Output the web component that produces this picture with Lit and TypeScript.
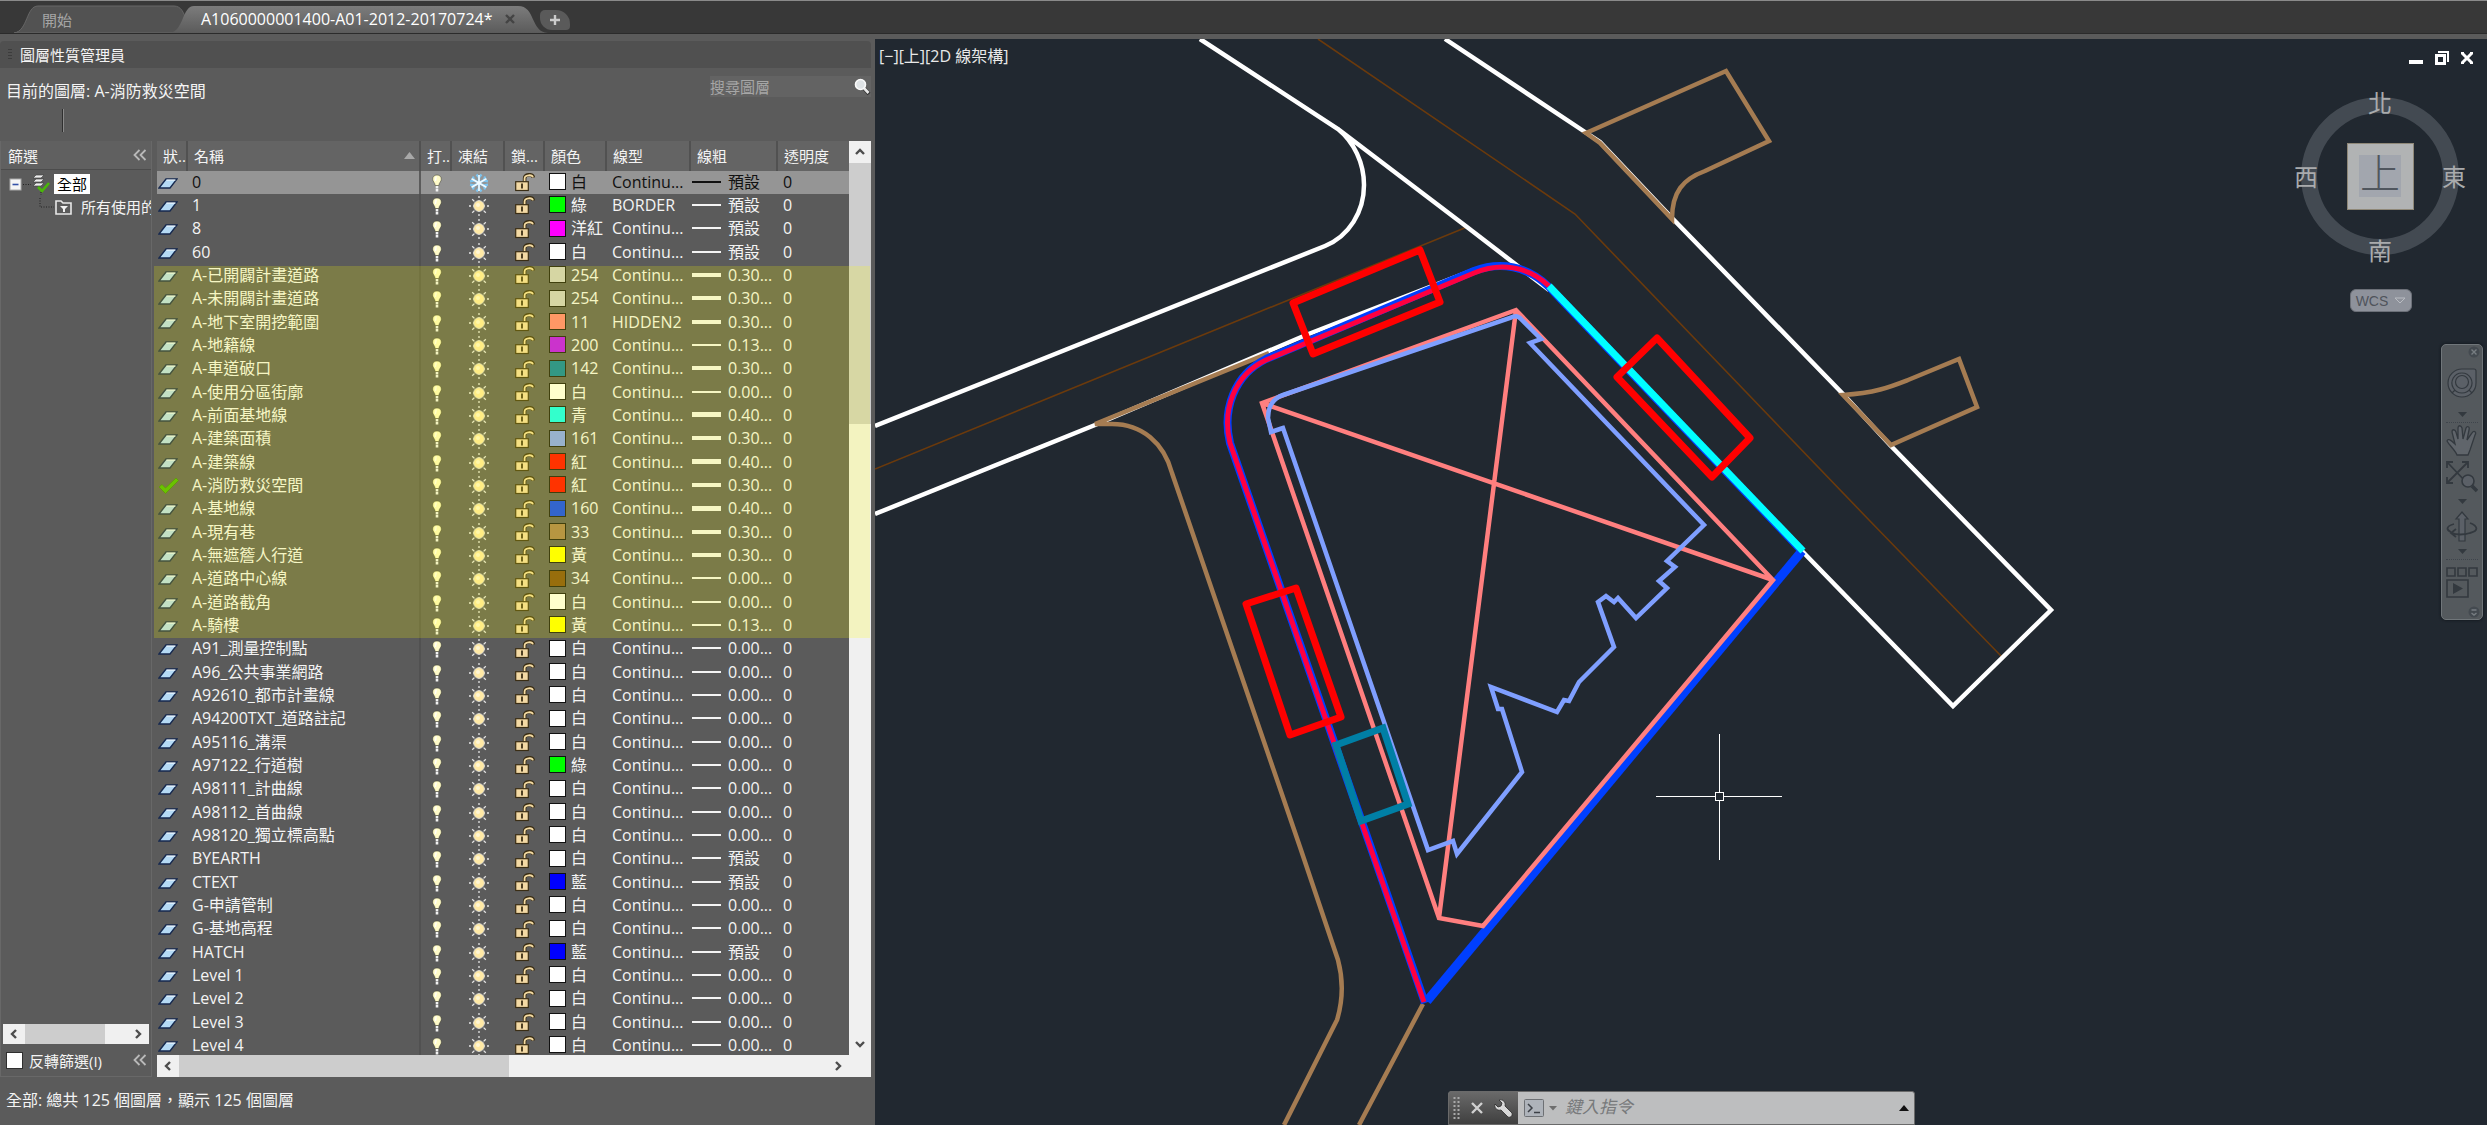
import { LitElement, html, css, svg } from "lit";
import { customElement, state } from "lit/decorators.js";
import { classMap } from "lit/directives/class-map.js";
import { styleMap } from "lit/directives/style-map.js";

interface Layer {
  name: string;
  color: string;
  hex: string;
  linetype: string;
  weight: string;
  px: number;
}

const WHITE = "#ffffff";
const layer = (
  name: string,
  color = "白",
  hex = WHITE,
  weight = "0.00...",
  px = 2,
  linetype = "Continu...",
): Layer => ({ name, color, hex, linetype, weight, px });

const LAYERS: Layer[] = [
  layer("0", "白", WHITE, "預設"),
  layer("1", "綠", "#00ff00", "預設", 2, "BORDER"),
  layer("8", "洋紅", "#ff00ff", "預設"),
  layer("60", "白", WHITE, "預設"),
  layer("A-已開闢計畫道路", "254", "#cccccc", "0.30...", 4),
  layer("A-未開闢計畫道路", "254", "#cccccc", "0.30...", 4),
  layer("A-地下室開挖範圍", "11", "#ff7f7f", "0.30...", 4, "HIDDEN2"),
  layer("A-地籍線", "200", "#bf00ff", "0.13..."),
  layer("A-車道破口", "142", "#007fa5", "0.30...", 4),
  layer("A-使用分區街廓"),
  layer("A-前面基地線", "青", "#00ffff", "0.40...", 5),
  layer("A-建築面積", "161", "#7f9fff", "0.30...", 4),
  layer("A-建築線", "紅", "#ff0000", "0.40...", 5),
  layer("A-消防救災空間", "紅", "#ff0000", "0.30...", 4),
  layer("A-基地線", "160", "#003fff", "0.40...", 5),
  layer("A-現有巷", "33", "#a57c52", "0.30...", 4),
  layer("A-無遮簷人行道", "黃", "#ffff00", "0.30...", 4),
  layer("A-道路中心線", "34", "#7f4a10"),
  layer("A-道路截角"),
  layer("A-騎樓", "黃", "#ffff00", "0.13..."),
  layer("A91_測量控制點"),
  layer("A96_公共事業網路"),
  layer("A92610_都市計畫線"),
  layer("A94200TXT_道路註記"),
  layer("A95116_溝渠"),
  layer("A97122_行道樹", "綠", "#00ff00"),
  layer("A98111_計曲線"),
  layer("A98112_首曲線"),
  layer("A98120_獨立標高點"),
  layer("BYEARTH", "白", WHITE, "預設"),
  layer("CTEXT", "藍", "#0000ff", "預設"),
  layer("G-申請管制"),
  layer("G-基地高程"),
  layer("HATCH", "藍", "#0000ff", "預設"),
  layer("Level 1"),
  layer("Level 2"),
  layer("Level 3"),
  layer("Level 4"),
];

const CURRENT = "A-消防救災空間";

const icon = (w: number, h: number, body: unknown) =>
  html`<svg class="ic" width=${w} height=${h} viewBox="0 0 ${w} ${h}" aria-hidden="true">${body}</svg>`;

const sheetIcon = () =>
  icon(20, 14, svg`<path d="M1 12 L8 3 L19 3 L12 12Z" fill="#b5daf5" stroke="#16294f" stroke-width="1.4"/>
    <path d="M8.5 4 L17.5 4" stroke="#fff"/>`);
const checkIcon = () =>
  icon(22, 18, svg`<path d="M1 10 L4 7.5 L7.5 11 L18 1 L20.5 3.5 L7.5 16.5Z" fill="#45b400" stroke="#2f7d00" stroke-width=".6"/>`);
const bulbIcon = () =>
  icon(12, 18, svg`<path d="M6 1C3 1 1.7 3 1.7 5.2C1.7 7.6 4 8.6 4.2 11.5L7.8 11.5C8 8.6 10.3 7.6 10.3 5.2C10.3 3 9 1 6 1Z" fill="#fffbc9" stroke="#3c3c2c" stroke-width=".5"/>
    <path d="M5.2 2.5L4.4 7" stroke="#fff" stroke-width="1.4"/>
    <path d="M6 12V17.5" stroke="#f2f2f2" stroke-width="2.6" stroke-dasharray="2.4 .7"/>`);
const sunIcon = () =>
  icon(20, 20, svg`<g stroke="#e6e6e6" stroke-width="1.3"><path d="M10 0V20M0 10H20" stroke-dasharray="2 2 12 2"/>
    <path d="M3.2 3.2L5.4 5.4M14.6 14.6L16.8 16.8M16.8 3.2L14.6 5.4M5.4 14.6L3.2 16.8"/></g>
    <circle cx="10" cy="10" r="5.4" fill="#ffe9a6" stroke="#cfcfcf" stroke-width=".8"/><circle cx="9" cy="9" r="2" fill="#fff6d6"/>`);
const snowIcon = () =>
  icon(20, 20, svg`<g stroke="#7cc4ef" stroke-width="2.2" fill="none"><path d="M10 2V18M2.6 5.8L17.4 14.2M17.4 5.8L2.6 14.2M7.5 1.5L10 4.5L12.5 1.5M7.5 18.5L10 15.5L12.5 18.5M1 8.3L5 7.6L4 3.6M19 8.3L15 7.6L16 3.6M1 11.7L5 12.4L4 16.4M19 11.7L15 12.4L16 16.4"/></g>
    <g stroke="#f2fbff" stroke-width="1.6"><path d="M10 2V18M2.6 5.8L17.4 14.2M17.4 5.8L2.6 14.2"/></g>`);
const lockIcon = () =>
  icon(22, 19, svg`<path d="M10.6 9V5.4C10.6 1 18.6 .4 19.3 4.6" fill="none" stroke="#3a2d14" stroke-width="3.6"/>
    <path d="M10.6 9V5.4C10.6 1.6 18.4 1.2 18.9 4.4" fill="none" stroke="#f5dca4" stroke-width="1.8"/>
    <rect x="1.7" y="8.7" width="12.6" height="8.8" fill="#f3d9a4" stroke="#3a2d14" stroke-width="1.2"/>
    <path d="M8 10.5V15.5" stroke="#3a2d14" stroke-width="1.8"/>`);
const chevrons = () =>
  icon(14, 12, svg`<path d="M6.5 1L1.5 6L6.5 11M12.5 1L7.5 6L12.5 11" fill="none" stroke="#b9b9b9" stroke-width="1.8"/>`);
const arrow = (d: string) =>
  icon(12, 12, svg`<path d=${d} fill="none" stroke="#4d4d4d" stroke-width="2.4"/>`);

@customElement("layer-manager")
class LayerManager extends LitElement {
  @state() private off = new Set<string>();
  @state() private invert = false;

  static styles = css`
    :host { display: grid; grid-template-rows: auto auto 1fr auto; min-height: 0; background: #5b5b5b; color: #f4f4f4; padding: 2px 4px 0 0; }
    * { box-sizing: border-box; }
    button { font: inherit; color: inherit; background: none; border: 0; padding: 0; display: inline-flex; align-items: center; justify-content: center; }
    .ic { display: block; flex: none; }
    .title { margin: 0; height: 27px; display: flex; align-items: center; gap: 8px; padding: 0 8px; font-size: 15px; font-weight: 400; background: #505050; border-radius: 4px 4px 0 0; }
    .grip { width: 4px; height: 12px; background: repeating-linear-gradient(#3c3c3c 0 1px, transparent 1px 3px); }
    .tools { height: 73px; display: flex; justify-content: space-between; align-items: flex-start; padding: 8px 0 0 6px; }
    .current { margin: 0; padding-top: 4px; line-height: 22px; }
    .mark { width: 2px; height: 23px; margin: 7px 0 0 56px; border-left: 1px solid #2f2f2f; border-right: 1px solid #8a8a8a; }
    .search { display: flex; align-items: center; width: 161px; height: 21px; background: #636363; }
    .search input { flex: 1; min-width: 0; border: 0; background: none; color: #eee; font: inherit; font-size: 15px; padding: 0; outline: 0; }
    .search input::placeholder { color: #a6a6a6; opacity: 1; }
    .body { display: grid; grid-template-columns: 152px minmax(0, 1fr); gap: 5px; min-height: 0; }
    .filters { display: grid; grid-template-rows: 29px minmax(0, 1fr) 20px 32px; border: 1px solid #686868; border-top: 0; min-height: 0; }
    .bar { display: flex; align-items: center; justify-content: space-between; padding: 0 4px 0 7px; }
    .filters .head { background: #606060; border-bottom: 1px solid #4c4c4c; }
    .head h2 { margin: 0; font-size: 15px; font-weight: 400; }
    .tree { margin: 0; padding: 2px 0 0 8px; list-style: none; overflow: hidden; font-size: 15px; }
    .tree li { display: flex; align-items: center; height: 23px; white-space: nowrap; }
    .tree .picked { background: #fff; color: #000; line-height: 20px; padding: 0 3px; margin-left: 3px; }
    .tree .child { padding-left: 30px; gap: 8px; }
    .tree .text { line-height: 22px; }
    .hbar { display: flex; align-items: stretch; background: #f0f0f0; color: #4d4d4d; }
    .hbar button { width: 22px; }
    .hbar .track { flex: 1; }
    .hbar .thumb { display: block; height: 100%; background: #cdcdcd; }
    .filters .hbar { margin: 0 2px; }
    .filters .hbar .thumb { width: 78%; }
    .grid .hbar .thumb { width: 51%; }
    .bar label { display: flex; align-items: center; gap: 6px; font-size: 15px; }
    .bar input { appearance: none; width: 17px; height: 17px; margin: 0; background: #fff; border: 1px solid #2f2f2f; }
    .bar input:checked { background: #45b400; }
    .foot { padding-left: 5px; }
    .grid { position: relative; display: grid; grid-template-columns: minmax(0, 1fr) 22px; grid-template-rows: minmax(0, 1fr) 22px; min-height: 0; }
    .clip { overflow: hidden; min-height: 0; }
    table { width: 100%; border-collapse: separate; border-spacing: 0; table-layout: fixed; }
    th { height: 30px; padding: 0 0 1px 6px; font-size: 15px; font-weight: 400; text-align: left; background: #646464; border-right: 2px solid #515151; white-space: nowrap; overflow: hidden; }
    th:last-child { border-right: 0; }
    .sort { display: flex; justify-content: space-between; align-items: center; padding-right: 3px; }
    td { height: 23px; padding: 0 0 2px 5px; line-height: 20px; white-space: nowrap; overflow: hidden; }
    tr:nth-child(3n) td { height: 24px; }
    td.named { border-right: 2px solid #515151; padding-left: 4px; }
    td.icon { padding: 0; }
    td.icon button, td.icon .ic { margin: 0 auto; }
    td.icon button { display: flex; }
    td.st { padding: 0 0 0 1px; }
    .sel td { background: #959595; color: #111; }
    .sel td.named { border-right-color: #5b5b5b; }
    .pair { display: flex; align-items: center; gap: 5px; }
    .swatch { flex: none; width: 17px; height: 17px; border: 1px solid #111; }
    .line { flex: none; width: 29px; background: currentColor; }
    .wt { padding-left: 1px; gap: 7px; }
    td.flush { padding-left: 0; }
    td.paint { padding-left: 4px; }
    .off { opacity: 0.4; }
    .vbar { display: flex; flex-direction: column; background: #f0f0f0; }
    .vbar button { height: 22px; width: 100%; }
    .vbar .track { flex: 1; }
    .vbar .thumb { height: 30%; background: #cdcdcd; }
    .grid .hbar { grid-column: 1 / -1; padding-right: 22px; }
    .marker { position: absolute; left: -3px; right: 1px; top: 125px; height: 372px; background: rgba(255, 255, 0, 0.2); pointer-events: none; }
    .status { margin: 0; height: 48px; line-height: 46px; padding-left: 6px; }
  `;

  private toggle(key: string) {
    const next = new Set(this.off);
    next.has(key) ? next.delete(key) : next.add(key);
    this.off = next;
  }

  private cell(l: Layer, kind: string, label: string, glyph: unknown) {
    const key = `${l.name}/${kind}`;
    return html`<td class="icon"><button class=${classMap({ off: this.off.has(key) })} aria-label="${label} ${l.name}" @click=${() => this.toggle(key)}>${glyph}</button></td>`;
  }

  private row(l: Layer, i: number) {
    return html`<tr class=${classMap({ sel: i === 0 })}>
      <td class="st">${l.name === CURRENT ? checkIcon() : sheetIcon()}</td>
      <td class="named">${l.name}</td>
      ${this.cell(l, "on", "打開", bulbIcon())}
      ${this.cell(l, "freeze", "凍結", i === 0 ? snowIcon() : sunIcon())}
      ${this.cell(l, "lock", "鎖護", lockIcon())}
      <td class="paint"><span class="pair"><span class="swatch" style=${styleMap({ background: l.hex })}></span>${l.color}</span></td>
      <td>${l.linetype}</td>
      <td class="flush"><span class="pair wt"><span class="line" style=${styleMap({ height: `${l.px}px` })}></span>${l.weight}</span></td>
      <td>0</td>
    </tr>`;
  }

  render() {
    const widths = [31, 233, 31, 53, 40, 62, 84, 87, 71];
    return html`
      <h1 class="title"><span class="grip"></span>圖層性質管理員</h1>
      <div class="tools">
        <div>
          <p class="current">目前的圖層: ${CURRENT}</p>
          <div class="mark"></div>
        </div>
        <div class="search">
          <input type="search" aria-label="搜尋圖層" placeholder="搜尋圖層" />
          ${icon(17, 18, svg`<path d="M9 9L15 16" stroke="#333" stroke-width="4"/><path d="M9 9L14.5 15" stroke="#e8e8e8" stroke-width="2.6"/><circle cx="6.5" cy="6.5" r="5" fill="#dfe3e6" stroke="#fafafa" stroke-width="1.6"/>`)}
        </div>
      </div>
      <div class="body">
        <section class="filters">
          <div class="bar head"><h2>篩選</h2><button aria-label="收闔篩選">${chevrons()}</button></div>
          <ul class="tree">
            <li>
              ${icon(42, 22, svg`<rect x="1" y="6" width="11" height="11" fill="#f5f5f5" stroke="#aaa"/><path d="M3.5 11.5H9.5" stroke="#3452a8" stroke-width="1.6"/>
                <path d="M14 11.5H22" stroke="#222" stroke-dasharray="1 1.5"/>
                <path d="M24 5L27 2H35L32 5ZM24 9L27 6H35L32 9ZM24 13L27 10H35L32 13Z" fill="#eee" stroke="#444" stroke-width=".7"/>
                <path d="M29 14L33 18L40 10" fill="none" stroke="#4ab60a" stroke-width="2.6"/><path d="M32 19V22" stroke="#222" stroke-dasharray="1 1.5"/>`)}
              <span class="picked">全部</span>
            </li>
            <li class="child">
              ${icon(34, 18, svg`<path d="M1 0V9H15" fill="none" stroke="#222" stroke-dasharray="1 1.5"/>
                <path d="M17 3H22L24 5H32V16H17Z" fill="#5b5b5b" stroke="#e8e8e8" stroke-width="1.6"/><path d="M21 8H29L26 11V14H24V11Z" fill="#f0f0f0"/>`)}
              <span class="text">所有使用的圖層</span>
            </li>
          </ul>
          <div class="hbar">
            <button aria-label="向左">${arrow("M8 2L4 6L8 10")}</button><span class="track"><span class="thumb"></span></span><button aria-label="向右">${arrow("M4 2L8 6L4 10")}</button>
          </div>
          <div class="bar foot">
            <label><input type="checkbox" .checked=${this.invert} @change=${() => (this.invert = !this.invert)} />反轉篩選(I)</label>
            <button aria-label="收闔">${chevrons()}</button>
          </div>
        </section>
        <section class="grid">
          <div class="clip">
            <table>
              <colgroup>${widths.map((w) => html`<col style=${styleMap({ width: `${w}px` })} />`)}</colgroup>
              <thead>
                <tr>
                  <th>狀..</th>
                  <th><span class="sort">名稱 ${icon(13, 9, svg`<path d="M1 8L6.5 1L12 8Z" fill="#a8a8a8"/>`)}</span></th>
                  <th>打..</th><th>凍結</th><th>鎖...</th><th>顏色</th><th>線型</th><th>線粗</th><th>透明度</th>
                </tr>
              </thead>
              <tbody>${LAYERS.map((l, i) => this.row(l, i))}</tbody>
            </table>
          </div>
          <div class="vbar">
            <button aria-label="向上">${arrow("M2 8L6 4L10 8")}</button><div class="track"><div class="thumb"></div></div><button aria-label="向下">${arrow("M2 4L6 8L10 4")}</button>
          </div>
          <div class="hbar">
            <button aria-label="向左">${arrow("M8 2L4 6L8 10")}</button><span class="track"><span class="thumb"></span></span><button aria-label="向右">${arrow("M4 2L8 6L4 10")}</button>
          </div>
          <div class="marker"></div>
        </section>
      </div>
      <p class="status">全部: 總共 125 個圖層，顯示 125 個圖層</p>
    `;
  }
}

@customElement("drawing-view")
class DrawingView extends LitElement {
  static styles = css`
    :host { display: block; position: relative; overflow: hidden; background: #212830; color: #e8e8e8; min-width: 0; }
    * { box-sizing: border-box; }
    button { font: inherit; color: inherit; background: none; border: 0; padding: 0; display: flex; align-items: center; justify-content: center; }
    .ic { display: block; flex: none; }
    .plan { position: absolute; inset: 0; width: 100%; height: 100%; }
    .plan * { fill: none; }
    .white { stroke: #fff; stroke-width: 4.5; }
    .axis { stroke: #6b3a0c; stroke-width: 1.6; }
    .lane { stroke: #a57c52; stroke-width: 4.5; }
    .site { stroke: #003fff; stroke-width: 9; }
    .side { stroke: #003fff; stroke-width: 8; }
    .build { stroke: #ff003f; stroke-width: 5; }
    .front { stroke: #00ffff; stroke-width: 7; }
    .dig { stroke: #ff7f7f; stroke-width: 4.5; }
    .area { stroke: #7f9fff; stroke-width: 4.5; }
    .cut { stroke: #007fa5; stroke-width: 7; }
    .fire { stroke: #ff0000; stroke-width: 7; stroke-linejoin: round; }
    .cursor { stroke: #fff; stroke-width: 1; shape-rendering: crispEdges; }
    .label { position: absolute; left: 4px; top: 6px; display: flex; line-height: 22px; }
    .win { position: absolute; right: 13px; top: 10px; display: flex; gap: 10px; }
    .cube { position: absolute; right: 17px; top: 49px; width: 180px; height: 180px; display: grid; grid-template: 32px 1fr 32px / 32px 1fr 32px; place-items: center; font-family: "Liberation Serif", "Noto Sans CJK TC", serif; font-size: 24px; color: #a9abad; }
    .ring { position: absolute; left: 11px; top: 9px; width: 158px; height: 158px; border: 16px solid #434a52; border-radius: 50%; }
    .cube span { position: relative; line-height: 32px; }
    .n { grid-area: 1 / 2; } .w { grid-area: 2 / 1; } .e { grid-area: 2 / 3; } .s { grid-area: 3 / 2; }
    .cube .top { position: relative; grid-area: 2 / 2; width: 67px; height: 67px; margin-bottom: 4px; background: #b1b3b4; border: 1px solid #8f8878; font-size: 40px; line-height: 42px; color: #50565e; }
    .top b { font-weight: 300; width: 42px; height: 42px; line-height: 40px; background: #a2a6ae; }
    .wcs { position: absolute; right: 75px; top: 250px; width: 62px; height: 23px; border-radius: 6px; background: #8e929b; border: 1px solid #6c7078; color: #50545c; font: 14px "Liberation Sans", sans-serif; gap: 6px; }
    .nav { position: absolute; right: 4px; top: 305px; width: 42px; height: 276px; border-radius: 5px; background: #54595d; border: 1px solid #70767a; box-shadow: 0 0 3px #0d1116; display: flex; flex-direction: column; align-items: center; padding: 1px 0; }
    .nav button { width: 100%; }
    .nav .end { justify-content: flex-end; padding-right: 2px; height: 12px; }
    .nav .big { height: 50px; } .nav .mid { height: 36px; } .nav .drop { height: 14px; }
    .nav hr { width: 32px; margin: 0; border: 0; border-top: 1px dotted #3f454c; }
    .nav .show { height: 44px; margin-bottom: auto; }
    .cmd { position: absolute; left: 573px; bottom: 0; width: 467px; height: 34px; display: flex; border: 1px solid #6a6a6a; background: #bdbebf; border-radius: 3px 3px 0 0; }
    .cmd .tools { display: flex; align-items: center; gap: 11px; width: 69px; padding-left: 4px; background: linear-gradient(#6a6a6a, #3f3f3f); }
    .cmd .prompt { padding: 0 8px 0 6px; gap: 5px; }
    .cmd input { flex: 1; min-width: 0; border: 0; background: none; outline: 0; font: italic 17px "Open Sans", "Noto Sans CJK TC", sans-serif; color: #333; padding: 0 0 4px; }
    .cmd input::placeholder { color: #77797b; opacity: 1; }
    .cmd .up { width: 20px; }
  `;

  render() {
    const dark = "#33393f";
    const drop = icon(9, 6, svg`<path d="M0 0H9L4.5 5Z" fill=${dark}/>`);
    return html`
      <svg class="plan" viewBox="875 39 1612 1086" preserveAspectRatio="xMinYMin slice" role="img" aria-label="基地配置圖">
        <path class="axis" d="M1318 39L1575 214L1869 520L2002 657M875 469L1467 227"/>
        <path class="white" d="M1200 39L1338 129L1467 227L1549 290M1338 129C1354 142 1364 163 1364 185C1364 212 1349 236 1325 246L875 426M875 514L1095 425L1306 335L1476 269M1445 39L1585 132L1600 142L1673 219L1843 394L1891 446L2051 610L1953 706L1802 551"/>
        <path class="lane" d="M1269 353L1095 424H1112C1142 424 1164 443 1172 473L1300 847L1338 960Q1346 990 1337 1020L1284 1125M1423 1004L1359 1125"/>
        <path class="lane" d="M1586 133L1726 71L1769 141L1705 171C1683 179 1672 192 1672 219L1600 143Z"/>
        <path class="lane" d="M1843 395C1875 393 1890 387 1908 380L1959 359L1977 407L1891 445Z"/>
        <path class="site" d="M1802 551L1427 1001"/>
        <path class="side" d="M1425 1003L1230 443C1222 410 1234 375 1266 359L1474 271C1500 261 1528 266 1549 287L1802 551"/>
        <path class="build" d="M1424 1002L1230 443C1222 410 1234 375 1266 360L1474 273C1500 262 1528 266 1549 286"/>
        <path class="front" d="M1549 286L1803 551"/>
        <path class="dig" d="M1516 310L1262 403L1439 918L1483 926L1773 580ZL1439 918M1262 403L1773 580"/>
        <path class="area" d="M1283 428L1271 432L1268 418C1268 406 1274 398 1283 395L1510 318Q1517 314 1521 319L1541 339L1530 343L1704 525L1667 561L1675 567L1659 581L1667 588L1636 618L1618 598L1614 602L1606 596L1598 602L1614 647L1579 682L1569 701L1564 700L1557 712L1491 687L1498 709L1502 709L1522 772L1457 854L1453 841L1428 850Z"/>
        <path class="cut" d="M1336 745L1383 728L1408 804L1361 821Z"/>
        <path class="fire" d="M1293 303L1420 250L1440 302L1313 354ZM1657 338L1750 438L1712 477L1617 377ZM1246 604L1296 588L1341 717L1290 735Z"/>
        <path class="cursor" d="M1656 796.5H1715M1724 796.5H1782M1719.5 734V792M1719.5 801V860"/>
        <rect class="cursor" x="1715.5" y="792.5" width="8" height="8"/>
      </svg>
      <div class="label"><button>[−]</button><button>[上]</button><button>[2D 線架構]</button></div>
      <div class="win">
        <button aria-label="最小化">${icon(16, 18, svg`<path d="M1 13H15" stroke="#fff" stroke-width="4"/>`)}</button>
        <button aria-label="還原">${icon(16, 18, svg`<path d="M5 4V3H14V12H13" fill="none" stroke="#fff" stroke-width="2"/><rect x="2.5" y="6.5" width="8" height="8" fill="none" stroke="#fff" stroke-width="3"/>`)}</button>
        <button aria-label="關閉">${icon(14, 18, svg`<path d="M2 4L12 14M12 4L2 14" stroke="#fff" stroke-width="3"/><path d="M1 4H4M10 4H13M1 14H4M10 14H13" stroke="#fff" stroke-width="2"/>`)}</button>
      </div>
      <div class="cube">
        <i class="ring"></i>
        <span class="n">北</span><span class="w">西</span><span class="e">東</span><span class="s">南</span>
        <button class="top"><b>上</b></button>
      </div>
      <button class="wcs">WCS ${icon(12, 7, svg`<path d="M1 1H11L6 6Z" fill="none" stroke="#b9bcc2"/>`)}</button>
      <div class="nav">
        <button class="end" aria-label="關閉導覽列">${icon(12, 12, svg`<circle cx="6" cy="6" r="5.5" fill="#444a50"/><path d="M3.5 3.5L8.5 8.5M8.5 3.5L3.5 8.5" stroke="#777d82" stroke-width="1.4"/>`)}</button>
        <button class="big" aria-label="操控盤">${icon(30, 30, svg`<g fill="#5b6067" stroke=${dark} stroke-width="1.2"><path d="M15 1H27Q29 1 29 3V15A14 14 0 1 1 15 1Z"/><path d="M15 5A10 10 0 1 1 14.9 5M8 22L5 25M22 22L25 25" /><circle cx="15" cy="14" r="6.5"/></g>`)}</button>
        <button class="drop" aria-label="操控盤選項">${drop}</button>
        <hr />
        <button class="mid" aria-label="平移">${icon(32, 32, svg`<path d="M11 30C9 25 3 20 1 16C2 13 5 15 9 19L6 7C6 4 9 4 10 7L12 14L12 3C12 0 15 0 16 3L17 14L20 3C21 1 24 1 23 5L21 15L26 8C28 5 31 7 29 10L24 25L22 30Z" fill="#60656b" stroke=${dark} stroke-width="1.3"/>`)}</button>
        <button class="mid" aria-label="實際範圍縮放">${icon(32, 32, svg`<path d="M2 2L20 21M21 2L2 21M1 7V1H7M16 1H22V7M1 16V22H7" fill="none" stroke=${dark} stroke-width="1.8"/><circle cx="22" cy="20" r="6" fill="#5b6067" stroke=${dark} stroke-width="1.6"/><path d="M26 25L31 30" stroke=${dark} stroke-width="3.6"/>`)}</button>
        <button class="drop" aria-label="縮放選項">${drop}</button>
        <button class="mid" aria-label="環轉">${icon(32, 32, svg`<path d="M13 30V8H10L16 1L22 8H19V30Z" fill="#5b6067" stroke=${dark} stroke-width="1.2"/><path d="M24 12C32 15 33 20 24 22C18 24 10 24 6 22M8 13C0 15 0 19 5 21M10 18L5 22L10 26" fill="none" stroke=${dark} stroke-width="1.8"/>`)}</button>
        <button class="drop" aria-label="環轉選項">${drop}</button>
        <hr />
        <button class="show" aria-label="動態演示">${icon(32, 32, svg`<g fill="none" stroke=${dark} stroke-width="1.6"><path d="M1 2H9V10H1ZM12 2H20V10H12ZM23 2H31V10H23ZM1 14H22V31H1Z"/></g><path d="M7 17L17 22.5L7 28Z" fill=${dark}/>`)}</button>
        <button class="end" aria-label="自訂導覽列">${icon(12, 12, svg`<circle cx="6" cy="6" r="5.5" fill="#444a50"/><path d="M3.5 4H8.5M3.5 7L6 9L8.5 7" fill="none" stroke="#777d82" stroke-width="1.4"/>`)}</button>
      </div>
      <form class="cmd" @submit=${(e: Event) => e.preventDefault()}>
        <div class="tools">
          ${icon(7, 24, svg`<path d="M1.5 1V24M5.5 1V24" stroke="#a9a9a9" stroke-width="2" stroke-dasharray="2 2"/>`)}
          <button type="button" aria-label="關閉">${icon(12, 12, svg`<path d="M1 1L11 11M11 1L1 11" stroke="#d0d0d0" stroke-width="2.4"/>`)}</button>
          <button type="button" aria-label="自訂">${icon(19, 19, svg`<path d="M5 1L8 4L7 7L4 8L1 5C0 9 3 12 7 11L14 18C16 19 19 17 18 14L11 7C12 3 9 0 5 1Z" fill="#d8d8d8" stroke="#2a2a2a" stroke-width=".8"/>`)}</button>
        </div>
        <button type="button" class="prompt" aria-label="最近的指令">
          ${icon(20, 18, svg`<rect x=".5" y=".5" width="19" height="17" rx="1" fill="#aeb3ba" stroke="#6d7074"/><path d="M4 5L8 9L4 13M10 13.5H16" fill="none" stroke="#3c4046" stroke-width="1.5"/>`)}
          ${icon(8, 5, svg`<path d="M0 0H8L4 4.5Z" fill="#6e6e6e"/>`)}
        </button>
        <input aria-label="指令" placeholder="鍵入指令" />
        <button type="button" class="up" aria-label="歷程">${icon(10, 6, svg`<path d="M0 6L5 0L10 6Z" fill="#111"/>`)}</button>
      </form>
    `;
  }
}

@customElement("app-root")
class AppRoot extends LitElement {
  static styles = css`
    :host { display: grid; grid-template-rows: 34px minmax(0, 1fr); height: 100vh; overflow: hidden; background: #5b5b5b; font: 16px "Open Sans", "Noto Sans CJK TC", sans-serif; color: #f4f4f4; }
    * { box-sizing: border-box; }
    button { font: inherit; background: none; border: 0; padding: 0; color: inherit; }
    .tabs { display: flex; align-items: flex-end; background: #383838; border-top: 1px solid #8a8a8a; border-bottom: 1px solid #2b2b2b; padding-left: 14px; }
    .tab { position: relative; display: flex; align-items: center; height: 28px; }
    .tab .shape { position: absolute; inset: 0; width: 100%; height: 100%; }
    .tab button { position: relative; }
    .home { width: 176px; color: #a6a6a6; padding-left: 28px; font-size: 15px; }
    .file { width: 378px; margin-left: -20px; padding-left: 31px; gap: 12px; color: #fff; }
    .close, .add { display: flex; align-items: center; justify-content: center; }
    .add { position: relative; width: 30px; height: 20px; margin: 0 0 3px -8px; background: #5a5a5a; border-radius: 5px 14px 4px 12px; }
    main { display: grid; grid-template-columns: 875px minmax(0, 1fr); min-height: 0; padding-top: 5px; }
  `;

  render() {
    return html`
      <nav class="tabs" aria-label="檔案標籤">
        <div class="tab home">
          <svg class="shape" viewBox="0 0 176 28" preserveAspectRatio="none" aria-hidden="true"><path d="M0 28C14 26 12 1 24 1H160C174 1 172 28 176 28Z" fill="#525252" stroke="#666"/></svg>
          <button>開始</button>
        </div>
        <div class="tab file">
          <svg class="shape" viewBox="0 0 378 28" preserveAspectRatio="none" aria-hidden="true">
            <defs><linearGradient id="lit" x1="0" y1="0" x2="0" y2="1"><stop offset="0" stop-color="#7c7c7c"/><stop offset="1" stop-color="#5b5b5b"/></linearGradient></defs>
            <path d="M0 28C14 26 12 1 24 1H348C366 1 360 27 378 28Z" fill="url(#lit)"/>
          </svg>
          <button class="name">A1060000001400-A01-2012-20170724*</button>
          <button class="close" aria-label="關閉">${icon(10, 10, svg`<path d="M1 1L9 9M9 1L1 9" stroke="#444" stroke-width="2.4"/>`)}</button>
        </div>
        <button class="add" aria-label="新圖面">${icon(12, 12, svg`<path d="M6 1V11M1 6H11" stroke="#ccc" stroke-width="2.4"/>`)}</button>
      </nav>
      <main>
        <layer-manager></layer-manager>
        <drawing-view></drawing-view>
      </main>
    `;
  }
}
